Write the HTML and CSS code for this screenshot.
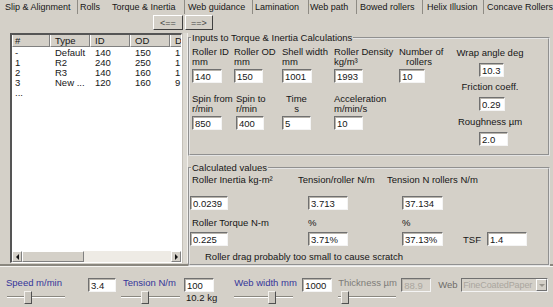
FILE: index.html
```html
<!DOCTYPE html>
<html>
<head>
    <title>Torque &amp; Inertia</title>
    <link rel="stylesheet" href="styles.css">
</head>
<body>
    <div class="tabs">
        <span class="tab t1">Slip &amp; Alignment</span>
        <span class="tab t2">Rolls</span>
        <span class="tab t3 active">Torque &amp; Inertia</span>
        <span class="tab t4">Web guidance</span>
        <span class="tab t5">Lamination</span>
        <span class="tab t6">Web path</span>
        <span class="tab t7">Bowed rollers</span>
        <span class="tab t8">Helix Illusion</span>
        <span class="tab t9">Concave Rollers</span>
    </div>

    <div class="nav-btns">
        <button class="btn b-prev">&lt;==</button>
        <button class="btn b-next">==&gt;</button>
    </div>

    <div class="main">
        <div class="list">
            <div class="list-head">
                <span>#</span>
                <span>Type</span>
                <span>ID</span>
                <span>OD</span>
                <span>D</span>
            </div>
            <div class="list-body">
                <div class="list-row"><span>-</span><span>Default</span><span>140</span><span>150</span><span>1</span></div>
                <div class="list-row"><span>1</span><span>R2</span><span>240</span><span>250</span><span>1</span></div>
                <div class="list-row"><span>2</span><span>R3</span><span>140</span><span>160</span><span>1</span></div>
                <div class="list-row"><span>3</span><span>New ...</span><span>120</span><span>160</span><span>9</span></div>
                <div class="list-row"><span>...</span></div>
            </div>
            <div class="hscroll">
                <div class="arrow a-left"></div>
                <div class="hthumb"></div>
                <div class="htrack"></div>
                <div class="arrow a-right"></div>
            </div>
        </div>
        <div class="vstrip"></div>

        <div class="groups">
            <fieldset class="group g-inputs">
                <legend>Inputs to Torque &amp; Inertia Calculations</legend>
                <div class="fields">
                    <div class="field">
                        <div class="lbl">Roller ID<br>mm</div>
                        <input class="in w30" type="text" value="140">
                    </div>
                    <div class="field">
                        <div class="lbl">Roller OD<br>mm</div>
                        <input class="in w29" type="text" value="150">
                    </div>
                    <div class="field">
                        <div class="lbl">Shell width<br>mm</div>
                        <input class="in w30" type="text" value="1001">
                    </div>
                    <div class="field">
                        <div class="lbl">Roller Density<br>kg/m³</div>
                        <input class="in w29" type="text" value="1993">
                    </div>
                    <div class="field">
                        <div class="lbl center w40">Number of<br>rollers</div>
                        <input class="in w26" type="text" value="10">
                    </div>

                    <div class="field">
                        <div class="lbl">Spin from<br>r/min</div>
                        <input class="in w30" type="text" value="850">
                    </div>
                    <div class="field shift2">
                        <div class="lbl">Spin to<br>r/min</div>
                        <input class="in w28" type="text" value="400">
                    </div>
                    <div class="field">
                        <div class="lbl center w29">Time<br>s</div>
                        <input class="in w29" type="text" value="5">
                    </div>
                    <div class="field">
                        <div class="lbl">Acceleration<br>m/min/s</div>
                        <input class="in w29" type="text" value="10">
                    </div>
                </div>

                <div class="side">
                    <div class="side-lbl">Wrap angle deg</div>
                    <input class="in w25 side-in" type="text" value="10.3">
                    <div class="side-lbl">Friction coeff.</div>
                    <input class="in w26 side-in" type="text" value="0.29">
                    <div class="side-lbl gap6">Roughness µm</div>
                    <input class="in w29 side-in" type="text" value="2.0">
                </div>
            </fieldset>

            <fieldset class="group g-calc">
                <legend>Calculated values</legend>
                <div class="calc-row">
                    <div class="lbl">Roller Inertia kg-m²</div>
                    <div class="lbl">Tension/roller N/m</div>
                    <div class="lbl">Tension N rollers N/m</div>
                </div>
                <div class="calc-row mt11">
                    <input class="in w38 c1" type="text" value="0.0239">
                    <input class="in w40 c2" type="text" value="3.713">
                    <input class="in w41 c3" type="text" value="37.134">
                </div>
                <div class="calc-row mt8">
                    <div class="lbl">Roller Torque N-m</div>
                    <div class="lbl c2">%</div>
                    <div class="lbl c3">%</div>
                </div>
                <div class="calc-row mt4">
                    <input class="in w38 c1" type="text" value="0.225">
                    <input class="in w40 c2" type="text" value="3.71%">
                    <input class="in w41 c3" type="text" value="37.13%">
                    <div class="tsf">
                        <span>TSF</span>
                        <input class="in w40" type="text" value="1.4">
                    </div>
                </div>
                <div class="note">Roller drag probably too small to cause scratch</div>
            </fieldset>
        </div>
    </div>

    <div class="sep"></div>

    <div class="bottom">
        <div class="ctl w82">
            <div class="blue">Speed m/min</div>
            <div class="slider sl58 ml1">
                <div class="track"></div>
                <div class="thumb" style="left: 17px"></div>
            </div>
        </div>
        <input class="in w28" type="text" value="3.4">

        <div class="ctl w63 ml5">
            <div class="blue pl2">Tension N/m</div>
            <div class="slider sl59">
                <div class="track"></div>
                <div class="thumb" style="left: 20px"></div>
            </div>
        </div>
        <div class="stack">
            <input class="in w30" type="text" value="100">
            <div class="sub">10.2 kg</div>
        </div>

        <div class="ctl w68 ml17">
            <div class="blue">Web width mm</div>
            <div class="slider sl59">
                <div class="track"></div>
                <div class="thumb" style="left: 34px"></div>
            </div>
        </div>
        <input class="in w30 in-white" type="text" value="1000">

        <div class="ctl w63 ml6">
            <div class="grey">Thickness µm</div>
            <div class="slider sl58">
                <div class="track"></div>
                <div class="thumb" style="left: 3px"></div>
            </div>
        </div>
        <input class="in w30 disabled" type="text" value="88.9" disabled>

        <div class="web-lbl ml7">Web</div>
        <div class="combo">
            <span class="combo-text">FineCoatedPaper</span>
            <span class="combo-btn"></span>
        </div>
    </div>
</body>
</html>
```

FILE: styles.css
```css
body {
    margin: 0;
    width: 553px;
    height: 307px;
    overflow: hidden;
    background-color: #d4d0c8;
    font-family: "Liberation Sans", Arial, sans-serif;
    font-size: 9.5px;
    color: #161616;
}

/* tab strip */
.tabs {
    display: flex;
    height: 15px;
}

.tab {
    box-sizing: border-box;
    height: 14px;
    line-height: 14px;
    padding-left: 3px;
    border-right: 1px solid #8e8b84;
    white-space: nowrap;
    overflow: hidden;
    font-size: 9px;
}

.t1 { width: 78px; padding-left: 5px; }
.t2 { width: 30px; padding-left: 2px; border-right: none; }
.t3 { width: 77px; padding-left: 4px; }
.t4 { width: 68px; }
.t5 { width: 56px; padding-left: 2px; }
.t6 { width: 48px; padding-left: 1px; }
.t7 { width: 66px; }
.t8 { width: 61px; padding-left: 4px; }
.t9 { flex: 1; border-right: none; }

/* prev / next */
.nav-btns {
    display: flex;
    gap: 2px;
    height: 17px;
    padding-left: 153px;
}

.btn {
    box-sizing: border-box;
    height: 15px;
    padding: 0;
    font-family: inherit;
    font-size: 9px;
    color: #444;
    background-color: #d4d0c8;
    border: 1px solid;
    border-color: #fff #404040 #404040 #fff;
}

.b-prev { width: 30px; }
.b-next { width: 28px; }

.main {
    display: flex;
    height: 231px;
}

/* roller list */
.list {
    box-sizing: border-box;
    width: 172px;
    height: 230px;
    margin: 1px 0 0 10px;
    display: flex;
    flex-direction: column;
    overflow: hidden;
    background-color: #fff;
    border-style: solid;
    border-width: 2px 1px 1px 2px;
    border-color: #555 #fff #fff #555;
}

.list-head,
.list-row {
    display: grid;
    grid-template-columns: 38px 40px 40px 40px 40px;
    white-space: nowrap;
}

.list-head span {
    box-sizing: border-box;
    height: 12px;
    line-height: 11px;
    padding-left: 4px;
    background-color: #d4d0c8;
    border-left: 1px solid #fff;
    border-right: 1px solid #808080;
    border-bottom: 1px solid #808080;
}

.list-head span:first-child {
    padding-left: 2px;
}

.list-body {
    flex: 1;
    padding-top: 1px;
}

.list-row span {
    line-height: 10px;
    padding-left: 5px;
}

.list-row span:first-child {
    padding-left: 3px;
}

.hscroll {
    display: flex;
    height: 11px;
    background-color: #eeebe5;
}

.arrow {
    box-sizing: border-box;
    width: 10px;
    display: flex;
    align-items: center;
    justify-content: center;
    background-color: #d4d0c8;
    border: 1px solid;
    border-color: #fff #808080 #808080 #fff;
}

.a-left::before {
    content: "";
    border-top: 3px solid transparent;
    border-bottom: 3px solid transparent;
    border-right: 3px solid #111;
}

.a-right::before {
    content: "";
    border-top: 3px solid transparent;
    border-bottom: 3px solid transparent;
    border-left: 3px solid #111;
}

.hthumb {
    box-sizing: border-box;
    width: 62px;
    background-color: #d4d0c8;
    border: 1px solid;
    border-color: #fff #808080 #808080 #fff;
}

.htrack {
    flex: 1;
}

.vstrip {
    box-sizing: border-box;
    width: 6px;
    height: 230px;
    margin-top: 1px;
    background-color: #dcd9d2;
    border-left: 1px solid #c4c0b8;
    border-right: 1px solid #f2f0ec;
}

/* group boxes */
.groups {
    width: 362px;
    display: flex;
    flex-direction: column;
}

.group {
    margin: 0;
    min-width: 0;
    border: 2px groove #e4e4e4;
}

.group legend {
    padding: 0 1px;
    margin-left: -1px;
    line-height: 11px;
}

.g-inputs {
    display: flex;
    padding: 4px 2px 3px 2px;
}

.g-calc {
    margin-top: 6px;
    padding: 2px 2px 2px 2px;
}

.fields {
    display: grid;
    grid-template-columns: 42px 48px 52px 65px 50px;
    row-gap: 11px;
    align-content: start;
}

.lbl {
    line-height: 10px;
    white-space: nowrap;
}

.field .lbl {
    height: 20px;
}

.field .in {
    margin-top: 2px;
}

.center { text-align: center; }
.shift2 { margin-left: 2px; }

.in {
    box-sizing: border-box;
    display: block;
    height: 14px;
    padding: 0 0 0 2px;
    font-family: inherit;
    font-size: 9.5px;
    color: #161616;
    background-color: #fff;
    border: 1px solid;
    border-color: #707070 #f4f4f4 #f4f4f4 #707070;
    box-shadow: inset 1px 1px 0 #b8b4ac;
    outline: none;
}

.w25 { width: 25px; }
.w26 { width: 26px; }
.w28 { width: 28px; }
.w29 { width: 29px; }
.w30 { width: 30px; }
.w38 { width: 38px; }
.w40 { width: 40px; }
.w41 { width: 41px; }

.side {
    width: 82px;
    padding-top: 1px;
}

.side-lbl {
    line-height: 10px;
    text-align: center;
    white-space: nowrap;
}

.side-in {
    margin: 5px 0 5px 30px;
}

.side .gap6 {
    margin-top: 6px;
}

/* calculated values */
.calc-row {
    display: grid;
    grid-template-columns: 106px 89px 76px 1fr;
    align-items: center;
}

.mt11 { margin-top: 11px; }
.mt8 { margin-top: 8px; }
.mt4 { margin-top: 4px; }

.calc-row .c1 { margin-left: -2px; }
.calc-row .c2 { margin-left: 10px; }
.calc-row .c3 { margin-left: 15px; }

.tsf {
    display: flex;
    align-items: center;
    gap: 6px;
}

.note {
    margin-top: 6px;
    padding-left: 13px;
    line-height: 10px;
}

.sep {
    margin-top: 1px;
    border-top: 2px solid #8a877f;
    border-bottom: 1px solid #f6f5f2;
}

/* bottom controls */
.bottom {
    display: flex;
    align-items: flex-start;
    padding: 11px 0 0 6px;
}

.ctl {
    display: flex;
    flex-direction: column;
}

.w63 { width: 63px; }
.w68 { width: 68px; }
.w82 { width: 82px; }
.ml1 { margin-left: 1px; }
.ml5 { margin-left: 5px; }
.ml6 { margin-left: 6px; }
.ml7 { margin-left: 7px; }
.ml17 { margin-left: 17px; }
.pl2 { padding-left: 2px; }

.blue {
    line-height: 10px;
    color: #35359a;
    white-space: nowrap;
}

.grey {
    line-height: 10px;
    color: #7e7c78;
    white-space: nowrap;
}

.slider {
    position: relative;
    height: 13px;
    margin-top: 3px;
}

.sl58 { width: 58px; }
.sl59 { width: 59px; }

.track {
    margin-top: 5px;
    border-top: 1px solid #8a877f;
    border-bottom: 1px solid #fff;
}

.thumb {
    position: absolute;
    top: 0;
    box-sizing: border-box;
    width: 8px;
    height: 13px;
    background-color: #c9c5bd;
    border: 1px solid;
    border-color: #f4f2ee #505050 #505050 #f4f2ee;
}

.stack {
    display: flex;
    flex-direction: column;
}

.sub {
    margin-top: 1px;
    padding-left: 2px;
    line-height: 10px;
}

.in-white {
    background-color: #fff;
}

.disabled {
    color: #aaa69e;
    background-color: #d4d0c8;
}

.web-lbl {
    width: 23px;
    line-height: 14px;
    color: #6e6c68;
}

.combo {
    box-sizing: border-box;
    width: 87px;
    height: 14px;
    display: flex;
    align-items: center;
    overflow: hidden;
    border: 1px solid;
    border-color: #707070 #f4f4f4 #f4f4f4 #707070;
}

.combo-text {
    flex: 1;
    padding-left: 1px;
    font-size: 9px;
    letter-spacing: -0.1px;
    color: #aaa69e;
    white-space: nowrap;
}

.combo-btn {
    box-sizing: border-box;
    width: 11px;
    height: 12px;
    display: flex;
    align-items: center;
    justify-content: center;
    background-color: #d4d0c8;
    border: 1px solid;
    border-color: #fff #707070 #707070 #fff;
}

.combo-btn::before {
    content: "";
    border-left: 3px solid transparent;
    border-right: 3px solid transparent;
    border-top: 3px solid #9a968e;
}
```
